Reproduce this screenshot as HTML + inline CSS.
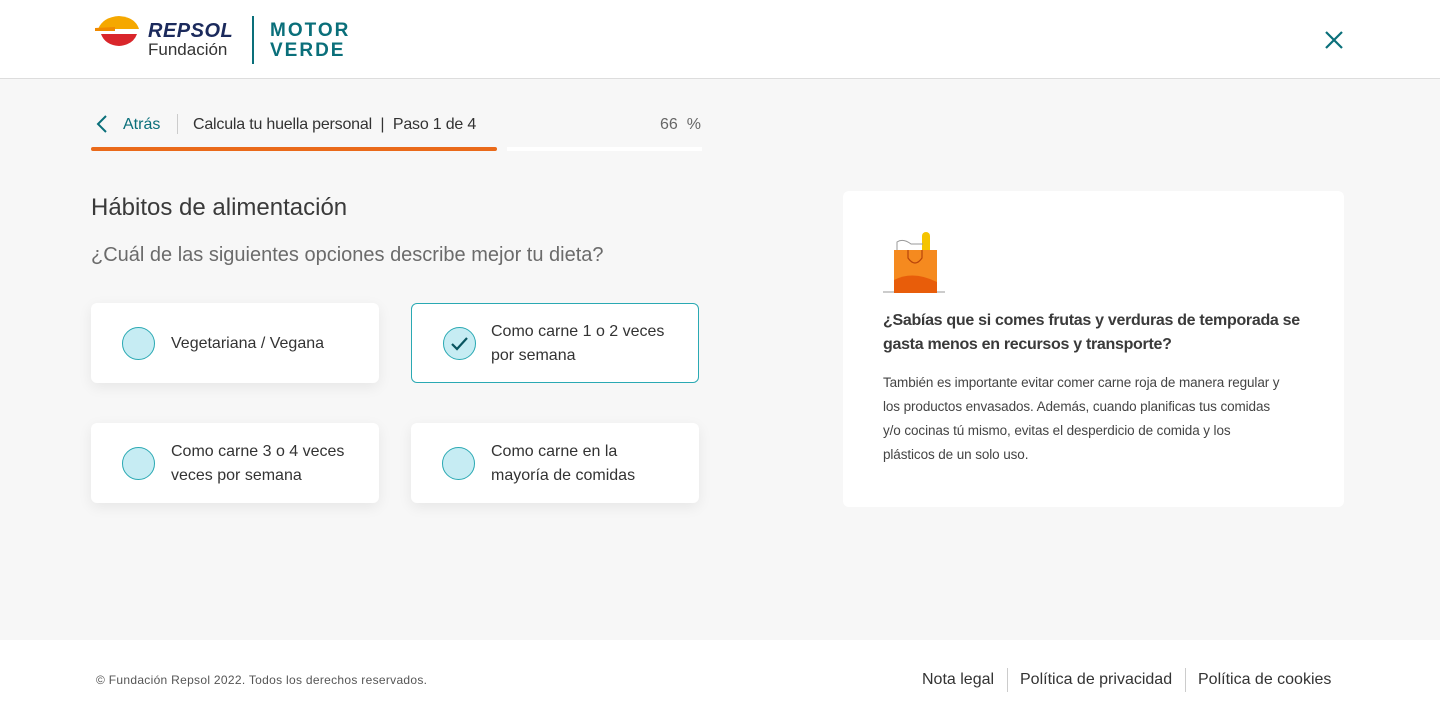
<!DOCTYPE html>
<html><head><meta charset="utf-8"><style>
*{margin:0;padding:0;box-sizing:border-box}
body{width:1440px;height:720px;background:#f7f7f7;font-family:"Liberation Sans",Arial,sans-serif;position:relative;overflow:hidden;color:#3a3a3a}
.hdr{position:absolute;left:0;top:0;width:1440px;height:79px;background:#fff;border-bottom:1px solid #ddd}
.ftr{position:absolute;left:0;top:640px;width:1440px;height:80px;background:#fff}
.abs{position:absolute}
.card{position:absolute;width:288px;height:80px;background:#fff;border-radius:6px;box-shadow:0 4px 14px rgba(0,0,0,0.07)}
.card .rad{position:absolute;left:31px;top:24px;width:33px;height:33px;border-radius:50%;background:#c6ecf3;border:1px solid #2aa9b3}
.card .t{position:absolute;left:80px;font-size:16px;line-height:24px;color:#333}
</style></head><body>
<div class="hdr">
 <svg class="abs" style="left:95px;top:15px" width="46" height="32" viewBox="0 0 46 32">
  <path d="M3 14 Q8 2 24 1 Q40 2 44 14 Z" fill="#f5a800"/>
  <path d="M2 14 L44 14 L44 19 L2 19 Z" fill="#fff"/>
  <path d="M6 19 L42 19 Q38 30 24 31 Q10 30 6 19 Z" fill="#d9262b"/>
  <path d="M0 13 L20 12 L20 16 L0 16Z" fill="#f08a00"/>
 </svg>
 <div class="abs" style="left:148px;top:20px;font-size:20px;font-weight:bold;font-style:italic;color:#1b2a5c;letter-spacing:0.5px">REPSOL</div>
 <div class="abs" style="left:148px;top:40px;font-size:17px;color:#333">Fundación</div>
 <div class="abs" style="left:252px;top:16px;width:2px;height:48px;background:#0a6f7a"></div>
 <div class="abs" style="left:270px;top:21px;font-size:19px;font-weight:bold;color:#0a6f7a;letter-spacing:2px;line-height:20px">MOTOR<br>VERDE</div>
 <svg class="abs" style="left:1324px;top:30px" width="20" height="20" viewBox="0 0 20 20"><path d="M2 2L18 18M18 2L2 18" stroke="#0a6f7a" stroke-width="2.2"/></svg>
</div>
<svg class="abs" style="left:96px;top:115px" width="12" height="18" viewBox="0 0 12 18"><path d="M10 1L2 9L10 17" stroke="#0a6f7a" stroke-width="2" fill="none"/></svg>
<div class="abs" style="left:123px;top:116px;font-size:16px;color:#0a6f7a">Atrás</div>
<div class="abs" style="left:177px;top:114px;width:1px;height:20px;background:#ccc"></div>
<div class="abs" style="left:193px;top:116px;font-size:16px;color:#333;letter-spacing:-0.2px">Calcula tu huella personal &nbsp;|&nbsp; Paso 1 de 4</div>
<div class="abs" style="left:660px;top:116px;font-size:16px;color:#666">66 &nbsp;%</div>
<div class="abs" style="left:91px;top:147px;width:406px;height:4px;background:#ea6a1a;border-radius:2px"></div>
<div class="abs" style="left:507px;top:147px;width:195px;height:4px;background:#fff"></div>
<div class="abs" style="left:91px;top:194px;font-size:24px;color:#3a3a3a">Hábitos de alimentación</div>
<div class="abs" style="left:91px;top:244px;font-size:20px;color:#6b6b6b">¿Cuál de las siguientes opciones describe mejor tu dieta?</div>
<div class="card" style="left:91px;top:303px"><div class="rad"></div><div class="t" style="top:29px">Vegetariana / Vegana</div></div>
<div class="card" style="left:411px;top:303px;border:1px solid #2aa9b3;box-shadow:none"><div class="rad" style="left:31px;top:23px"><svg width="31" height="31" viewBox="0 0 31 31"><path d="M8 16L13 21L23 10" stroke="#0a5560" stroke-width="2.2" fill="none"/></svg></div><div class="t" style="top:16px;left:79px">Como carne 1 o 2 veces<br>por semana</div></div>
<div class="card" style="left:91px;top:423px"><div class="rad"></div><div class="t" style="top:17px">Como carne 3 o 4 veces<br>veces por semana</div></div>
<div class="card" style="left:411px;top:423px"><div class="rad"></div><div class="t" style="top:17px">Como carne en la<br>mayoría de comidas</div></div>
<div class="abs" style="left:843px;top:191px;width:501px;height:316px;background:#fff;border-radius:6px">
 <svg class="abs" style="left:40px;top:39px" width="64" height="66" viewBox="0 0 64 66">
  <line x1="0" y1="62" x2="62" y2="62" stroke="#999" stroke-width="1"/>
  <rect x="39" y="2" width="8" height="26" rx="4" fill="#f5c400"/>
  <path d="M14 20 L14 12 Q20 8 28 14 L40 14" stroke="#999" fill="none" stroke-width="1"/>
  <rect x="11" y="20" width="43" height="43" fill="#f58a1f"/>
  <path d="M11 50 Q30 40 54 52 L54 63 L11 63Z" fill="#e85d0a"/>
  <path d="M25 20 L25 28 Q32 38 39 28 L39 20" stroke="#b8440a" stroke-width="1.2" fill="none"/>
 </svg>
 <div class="abs" style="left:40px;top:118px;font-size:16px;font-weight:bold;line-height:24px;color:#3a3a3a;width:440px;letter-spacing:-0.3px;white-space:nowrap">¿Sabías que si comes frutas y verduras de temporada se<br>gasta menos en recursos y transporte?</div>
 <div class="abs" style="left:40px;top:180px;font-size:13.5px;line-height:24px;color:#444;width:425px;letter-spacing:-0.1px">También es importante evitar comer carne roja de manera regular y<br>los productos envasados. Además, cuando planificas tus comidas<br>y/o cocinas tú mismo, evitas el desperdicio de comida y los<br>plásticos de un solo uso.</div>
</div>
<div class="ftr">
 <div class="abs" style="left:96px;top:33px;font-size:12px;color:#555;letter-spacing:0.3px">© Fundación Repsol 2022. Todos los derechos reservados.</div>
 <div class="abs" style="left:922px;top:31px;font-size:16px;color:#333">Nota legal</div>
 <div class="abs" style="left:1007px;top:28px;width:1px;height:24px;background:#ccc"></div>
 <div class="abs" style="left:1020px;top:31px;font-size:16px;color:#333">Política de privacidad</div>
 <div class="abs" style="left:1185px;top:28px;width:1px;height:24px;background:#ccc"></div>
 <div class="abs" style="left:1198px;top:31px;font-size:16px;color:#333">Política de cookies</div>
</div>
</body></html>
